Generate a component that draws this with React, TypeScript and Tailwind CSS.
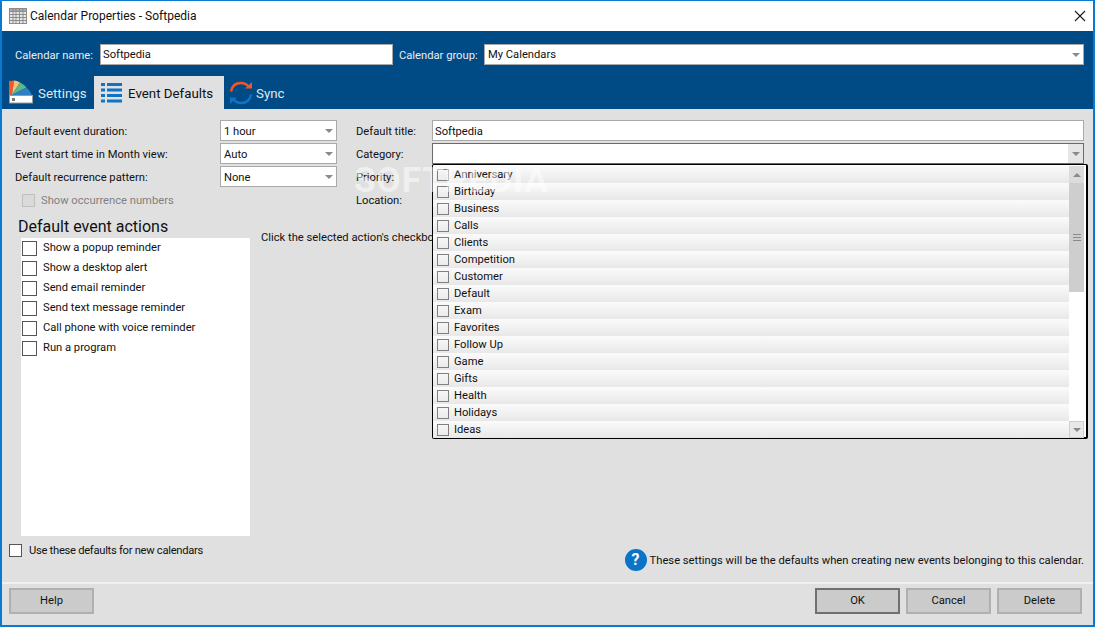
const categories = [
  "Anniversary",
  "Birthday",
  "Business",
  "Calls",
  "Clients",
  "Competition",
  "Customer",
  "Default",
  "Exam",
  "Favorites",
  "Follow Up",
  "Game",
  "Gifts",
  "Health",
  "Holidays",
  "Ideas",
];

const actions = [
  "Show a popup reminder",
  "Show a desktop alert",
  "Send email reminder",
  "Send text message reminder",
  "Call phone with voice reminder",
  "Run a program",
];

function Arrow({ up = false }: { up?: boolean }) {
  return (
    <svg width="8" height="4" viewBox="0 0 8 4" className={up ? "rotate-180" : ""}>
      <path d="M0 0h8L4 4z" fill="#8a8a8a" />
    </svg>
  );
}

function Select({ value, className }: { value: string; className: string }) {
  return (
    <div className={`flex h-[21px] items-center justify-between border border-[#a9a9a9] bg-white pr-[3px] pl-[3px] ${className}`}>
      <span className="pt-[2px]">{value}</span>
      <Arrow />
    </div>
  );
}

function CalendarIcon() {
  return (
    <svg width="18" height="16" viewBox="0 0 18 16">
      <rect x="0.5" y="0.5" width="17" height="15" fill="#e8e8e8" stroke="#8c8c8c" />
      <rect x="0.5" y="0.5" width="17" height="3" fill="#a8a8a8" stroke="#8c8c8c" />
      <path d="M4 1v14M7 1v14M10.500 1v14M14 1v14M1 6.500h16M1 9.500h16M1 12.500h16" stroke="#8c8c8c" />
    </svg>
  );
}

function SettingsIcon() {
  return (
    <svg width="25" height="25" viewBox="0 0 25 25">
      <path d="M0 15V1l5-.5L3 15z" fill="#f4562a" />
      <path d="M3 15L5 .5q3 0 6 2z" fill="#f0c27a" />
      <path d="M3 15l8-12.500q4 2 6.500 5z" fill="#5cb88a" />
      <path d="M3 15l14.500-7.500q3.500 3 5.500 7.500z" fill="#2f7fc4" />
      <rect x="0.500" y="15.500" width="23" height="7.500" fill="#fff" stroke="#9a9a9a" />
      <rect x="3" y="18" width="3" height="3" fill="#777" />
    </svg>
  );
}

function ListIcon() {
  return (
    <svg width="21" height="20" viewBox="0 0 21 20" fill="#1073c6">
      <rect x="0" y="0" width="4" height="3" />
      <rect x="6" y="0" width="15" height="3" />
      <rect x="0" y="5.500" width="4" height="3" />
      <rect x="6" y="5.500" width="15" height="3" />
      <rect x="0" y="11" width="4" height="3" />
      <rect x="6" y="11" width="15" height="3" />
      <rect x="0" y="16.500" width="4" height="3" />
      <rect x="6" y="16.500" width="15" height="3" />
    </svg>
  );
}

function SyncIcon() {
  return (
    <svg width="24" height="24" viewBox="0 0 24 24" fill="none">
      <path d="M2 10.500C3 5 7 2 12 2c3 0 5.500 1 7.500 3.500" stroke="#f4562a" strokeWidth="2.400" />
      <path d="M16 7.500h7V1z" fill="#f4562a" />
      <path d="M22 13.500C21 19 17 22 12 22c-3 0-5.500-1-7.500-3.500" stroke="#1073c6" strokeWidth="2.400" />
      <path d="M8 16.500H1V23z" fill="#1073c6" />
    </svg>
  );
}

function Button({ label, primary = false }: { label: string; primary?: boolean }) {
  return (
    <button
      type="button"
      className={`h-[26px] w-[85px] bg-[#cbcbcb] pt-[1px] ${primary ? "border-2 border-[#707070]" : "border-2 border-[#b0b0b0]"}`}
    >
      {label}
    </button>
  );
}

export default function App() {
  return (
    <div className="flex h-[627px] w-[1095px] flex-col overflow-hidden border-x-2 border-t border-b-2 border-[#0a7ad1] bg-[#e0e0e0] font-['Roboto',sans-serif] text-[11.2px] whitespace-nowrap text-[#111]">
      {/* title bar */}
      <div className="flex h-[30px] shrink-0 items-center bg-white pr-[7px] pl-[7px]">
        <CalendarIcon />
        <span className="ml-[3px] text-[12px]">Calendar Properties - Softpedia</span>
        <svg className="ml-auto" width="12" height="12" viewBox="0 0 12 12" stroke="#222" strokeWidth="1.200">
          <path d="M1 1l10 10M11 1L1 11" />
        </svg>
      </div>

      {/* blue header */}
      <div className="flex h-[78px] shrink-0 flex-col bg-[#004b85]">
        <div className="flex h-[45px] items-start pt-[13px] pr-[9px] pl-[13px] text-[#e6edf3]">
          <span className="w-[85px] leading-[23px]">Calendar name:</span>
          <div className="flex h-[21px] w-[293px] items-center border border-[#a9a9a9] bg-white pt-[2px] pl-[2px] text-[#111]">Softpedia</div>
          <span className="ml-[6px] w-[85px] leading-[23px]">Calendar group:</span>
          <Select value="My Calendars" className="flex-1 text-[#111]" />
        </div>
        <div className="flex h-[33px] items-end text-[13.3px] text-[#dfe8f0]">
          <div className="flex h-[33px] w-[92px] items-center pl-[7px]">
            <SettingsIcon />
            <span className="ml-[4px] pt-[2px]">Settings</span>
          </div>
          <div className="flex h-[33px] w-[130px] items-center bg-[#e0e0e0] pl-[7px] text-[#111]">
            <ListIcon />
            <span className="ml-[6px] pt-[2px]">Event Defaults</span>
          </div>
          <div className="flex h-[33px] items-center pl-[5px]">
            <SyncIcon />
            <span className="ml-[3px] pt-[2px]">Sync</span>
          </div>
        </div>
      </div>

      {/* body */}
      <div className="relative flex min-h-0 flex-1 flex-col pt-[11px]">
        <div className="flex pl-[13px]">
          <div className="w-[322px]">
            <div className="flex h-[23px] items-start justify-between leading-[23px]">
              <span>Default event duration:</span>
              <Select value="1 hour" className="w-[117px]" />
            </div>
            <div className="flex h-[23px] items-start justify-between leading-[23px]">
              <span>Event start time in Month view:</span>
              <Select value="Auto" className="w-[117px]" />
            </div>
            <div className="flex h-[23px] items-start justify-between leading-[23px]">
              <span>Default recurrence pattern:</span>
              <Select value="None" className="w-[117px]" />
            </div>
            <div className="flex h-[23px] items-center pl-[7px] text-[#808080]">
              <span className="h-[13px] w-[13px] border border-[#c0c0c0] bg-[#dadada]" />
              <span className="ml-[6px] pt-[1px]">Show occurrence numbers</span>
            </div>
          </div>
          <div className="ml-[19px] flex-1 pr-[9px]">
            <div className="flex h-[23px] items-start leading-[23px]">
              <span className="w-[76px]">Default title:</span>
              <div className="flex h-[21px] flex-1 items-center border border-[#a9a9a9] bg-white pt-[2px] pl-[2px]">Softpedia</div>
            </div>
            <div className="flex h-[23px] items-start leading-[23px]">
              <span className="w-[76px]">Category:</span>
              <div className="flex h-[21px] flex-1 justify-end border border-[#6a6a6a] bg-white">
                <div className="flex w-[15px] items-center justify-center bg-[#e6e6e6]">
                  <Arrow />
                </div>
              </div>
            </div>
            <div className="h-[23px] leading-[23px]">Priority:</div>
            <div className="h-[23px] leading-[23px]">Location:</div>
          </div>
        </div>

        <div className="flex flex-1 pl-[19px]">
          <div className="w-[229px]">
            <div className="-ml-[3px] h-[26px] pt-[4px] text-[16px] leading-[22px]">Default event actions</div>
            <div className="h-[298px] bg-white pl-[1px]">
              {actions.map((a) => (
                <div key={a} className="flex h-[20px] items-center">
                  <span className="h-[15px] w-[15px] border border-[#555] bg-white" />
                  <span className="ml-[6px] pt-[1px]">{a}</span>
                </div>
              ))}
            </div>
          </div>
          <div className="ml-[11px] pt-[18px]">Click the selected action's checkbox to enable it</div>
        </div>

        <div className="flex h-[46px] items-start pr-[9px] pl-[7px]">
          <span className="mt-[8px] h-[13px] w-[13px] border border-[#555] bg-white" />
          <span className="mt-[7px] ml-[7px] tracking-[-0.28px]">Use these defaults for new calendars</span>
          <div className="mt-[13px] ml-auto flex h-[22px] items-center">
            <span className="flex h-[22px] w-[22px] items-center justify-center rounded-full bg-[#0a74c8] text-[16px] font-bold text-white">?</span>
            <span className="ml-[3px] pt-[2px]">These settings will be the defaults when creating new events belonging to this calendar.</span>
          </div>
        </div>

        {/* category popup */}
        <div className="absolute top-[55px] left-[430px] flex h-[275px] w-[656px] rounded-[2px] border border-r-2 border-b-2 border-black bg-white pt-[1px]">
          <div className="w-[636px]">
            {categories.map((c) => (
              <div key={c} className="flex h-[17px] items-center bg-gradient-to-b from-[#fbfbfb] to-[#e8e8e8] pl-[4px]">
                <span className="h-[12px] w-[12px] border border-[#808080]" />
                <span className="ml-[5px] pt-[2px]">{c}</span>
              </div>
            ))}
          </div>
          <div className="flex h-[272px] w-[15px] flex-col">
            <div className="flex h-[17px] items-center justify-center bg-[#dcdcdc]">
              <Arrow up />
            </div>
            <div className="flex h-[109px] items-center justify-center bg-[#cecece]">
              <svg width="8" height="7" viewBox="0 0 8 7" stroke="#8a8a8a">
                <path d="M0 .5h8M0 3.500h8M0 6.500h8" />
              </svg>
            </div>
            <div className="flex-1 bg-white" />
            <div className="flex h-[17px] items-center justify-center border border-[#cfcfcf] bg-[#e8e8e8]">
              <Arrow />
            </div>
          </div>
        </div>

        {/* watermark */}
        <div className="pointer-events-none absolute top-[46px] left-[352px] text-[35px] font-bold tracking-[1px] text-white opacity-50">SOFTPEDIA</div>
      </div>

      {/* footer */}
      <div className="flex h-[43px] shrink-0 items-start border-t-2 border-[#f0f0f0] pt-[4px] pr-[11px] pl-[7px]">
        <Button label="Help" />
        <div className="ml-auto flex gap-[6px]">
          <Button label="OK" primary />
          <Button label="Cancel" />
          <Button label="Delete" />
        </div>
      </div>
    </div>
  );
}
